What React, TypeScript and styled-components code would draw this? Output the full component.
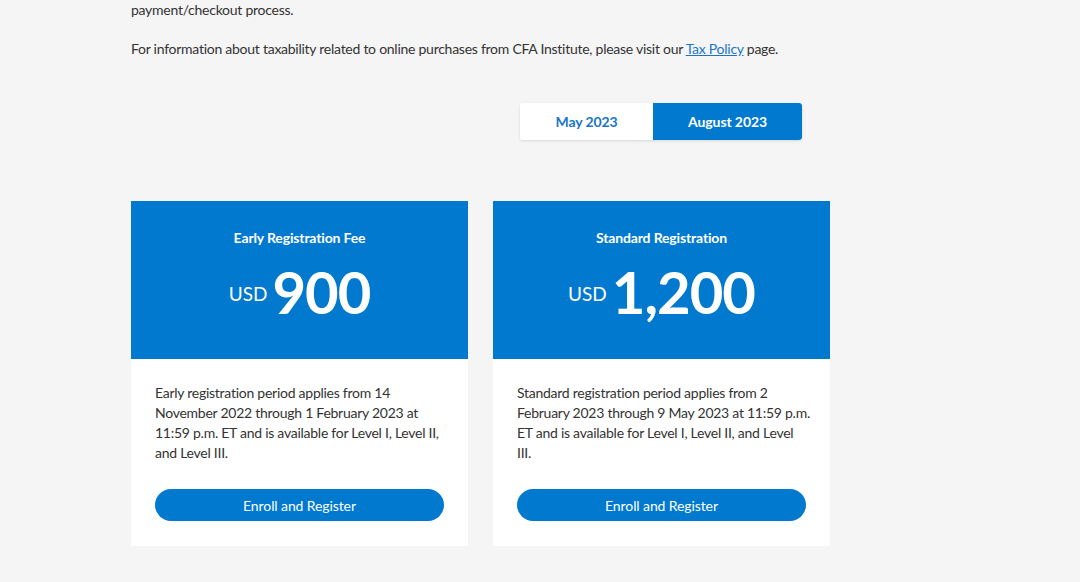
import React, { ReactElement, useState } from "react";
import styled, { createGlobalStyle } from "styled-components";

const GlobalStyle = createGlobalStyle`
    body {
        margin: 0;
        background: #f5f5f5;
        font-family: Lato, "Open Sans", sans-serif;
        color: #333333;
    }
`;

const Page = styled.main`
    padding: 0 0 0 131px;
    width: 1080px;
    height: 582px;
    box-sizing: border-box;
    overflow: hidden;
`;

const Paragraph = styled.p`
    margin: 0 0 19px 0;
    font-size: 14px;
    line-height: 20px;
    letter-spacing: -0.26px;
    color: #333333;
`;

const Link = styled.a`
    color: #1a75c9;
    text-decoration: underline;
`;

const TabBar = styled.div`
    display: flex;
    margin: 44px 0 0 389px;
    width: 282px;
    height: 37px;
    border-radius: 3px;
    overflow: hidden;
    box-shadow: 0 1px 3px rgba(0, 0, 0, 0.12);
    background: #ffffff;
`;

const Tab = styled.button<{ $active: boolean; $width: number }>`
    width: ${(p) => p.$width}px;
    border: none;
    padding: 0;
    font-family: Lato, sans-serif;
    font-size: 14px;
    font-weight: 700;
    letter-spacing: -0.1px;
    cursor: pointer;
    background: ${(p) => (p.$active ? "#0079cf" : "#ffffff")};
    color: ${(p) => (p.$active ? "#ffffff" : "#1a75c9")};
`;

const Cards = styled.div`
    display: flex;
    gap: 25px;
    margin-top: 61px;
`;

const Card = styled.div`
    width: 337px;
    display: flex;
    flex-direction: column;
`;

const CardHead = styled.div`
    height: 158px;
    box-sizing: border-box;
    padding-top: 27px;
    background: #0079cf;
    color: #ffffff;
    display: flex;
    flex-direction: column;
    align-items: center;
`;

const CardTitle = styled.div`
    font-size: 14px;
    line-height: 20px;
    font-weight: 700;
    letter-spacing: -0.15px;
`;

const Price = styled.div`
    display: flex;
    align-items: center;
    margin-top: 12px;
`;

const Currency = styled.span`
    font-size: 19px;
    font-weight: 400;
    margin-right: 5px;
    margin-top: 2px;
`;

const Amount = styled.span`
    font-size: 58px;
    line-height: 64px;
    font-weight: 700;
    letter-spacing: -1px;
`;

const CardBody = styled.div`
    background: #ffffff;
    padding: 24px 20px 25px 24px;
`;

const CardText = styled.p`
    margin: 0;
    font-size: 14px;
    line-height: 20px;
    letter-spacing: -0.26px;
    color: #333333;
    min-height: 80px;
`;

const EnrollButton = styled.button`
    display: block;
    margin-top: 26px;
    width: 289px;
    height: 32px;
    border: none;
    border-radius: 16px;
    background: #0079cf;
    color: #ffffff;
    font-family: Lato, sans-serif;
    font-size: 14px;
    font-weight: 400;
    letter-spacing: -0.1px;
    cursor: pointer;
`;

const plans = [
    {
        title: "Early Registration Fee",
        amount: "900",
        text: "Early registration period applies from 14 November 2022 through 1 February 2023 at 11:59 p.m. ET and is available for Level I, Level II, and Level III.",
    },
    {
        title: "Standard Registration",
        amount: "1,200",
        text: "Standard registration period applies from 2 February 2023 through 9 May 2023 at 11:59 p.m. ET and is available for Level I, Level II, and Level III.",
    },
];

const App = (): ReactElement => {
    const [tab, setTab] = useState("aug");

    return (
        <Page>
            <GlobalStyle />
            <Paragraph>payment/checkout process.</Paragraph>
            <Paragraph>
                For information about taxability related to online purchases from CFA Institute, please
                visit our <Link href="#">Tax Policy</Link> page.
            </Paragraph>
            <TabBar>
                <Tab $active={tab === "may"} $width={133} onClick={() => setTab("may")}>
                    May 2023
                </Tab>
                <Tab $active={tab === "aug"} $width={149} onClick={() => setTab("aug")}>
                    August 2023
                </Tab>
            </TabBar>
            <Cards>
                {plans.map((plan) => (
                    <Card key={plan.title}>
                        <CardHead>
                            <CardTitle>{plan.title}</CardTitle>
                            <Price>
                                <Currency>USD</Currency>
                                <Amount>{plan.amount}</Amount>
                            </Price>
                        </CardHead>
                        <CardBody>
                            <CardText>{plan.text}</CardText>
                            <EnrollButton>Enroll and Register</EnrollButton>
                        </CardBody>
                    </Card>
                ))}
            </Cards>
        </Page>
    );
};

export default App;
